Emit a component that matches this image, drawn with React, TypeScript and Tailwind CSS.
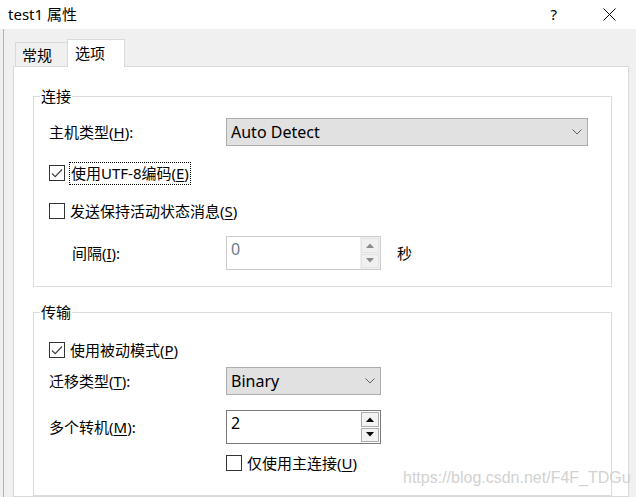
import React from 'react'

function Key({ children }: { children: React.ReactNode }) {
  return <span className="underline underline-offset-[2px] decoration-[1px]">{children}</span>
}

function CheckBox({ checked }: { checked?: boolean }) {
  return (
    <span className="w-[16px] h-[16px] shrink-0 border border-[#333333] bg-white flex items-center justify-center">
      {checked && (
        <svg width="14" height="14" viewBox="0 0 14 14">
          <path d="M2 7.5 L5.2 10.7 L12 3.5" stroke="#3c3c3c" strokeWidth="1.1" fill="none" />
        </svg>
      )}
    </span>
  )
}

function Chevron() {
  return (
    <svg width="10" height="6" viewBox="0 0 10 6" className="shrink-0">
      <path d="M0.5 0.5 L5 5 L9.5 0.5" stroke="#606060" strokeWidth="1" fill="none" />
    </svg>
  )
}

function Select({ value, className }: { value: string; className: string }) {
  return (
    <div
      className={`h-[28px] border border-[#adadad] bg-[#e1e1e1] flex items-center justify-between pl-[4px] pr-[5px] text-[16px] leading-[20px] text-black ${className}`}
    >
      <span>{value}</span>
      <Chevron />
    </div>
  )
}

function Triangle({ up, color }: { up?: boolean; color: string }) {
  return (
    <svg width="8" height="5" viewBox="0 0 8 5">
      <path d={up ? 'M0 5 L4 0.5 L8 5 Z' : 'M0 0 L4 4.5 L8 0 Z'} fill={color} />
    </svg>
  )
}

function Spinner({ value, disabled }: { value: string; disabled?: boolean }) {
  const btn = disabled
    ? 'bg-[#f0f0f0] border border-[#e3e3e3]'
    : 'bg-[#f3f3f3] border border-[#adadad]'
  const tri = disabled ? '#8a8a8a' : '#000000'
  return (
    <div
      className={`w-[155px] h-[34px] bg-white flex border ${
        disabled ? 'border-[#cccccc]' : 'border-[#7a7a7a]'
      }`}
    >
      <div
        className={`flex-1 pl-[4px] pt-[2px] text-[16px] leading-[20px] ${
          disabled ? 'text-[#6d7a8a]' : 'text-black'
        }`}
      >
        {value}
      </div>
      <div className={`w-[20px] flex flex-col gap-[1px] p-[1px] ${disabled ? 'bg-[#f0f0f0]' : ''}`}>
        <div className={`flex-1 flex items-center justify-center ${btn}`}>
          <Triangle up color={tri} />
        </div>
        <div className={`flex-1 flex items-center justify-center ${btn}`}>
          <Triangle color={tri} />
        </div>
      </div>
    </div>
  )
}

export default function App() {
  return (
    <div className="w-[636px] h-[497px] overflow-hidden relative flex flex-col bg-[#f0f0f0] text-black font-['Noto_Sans','Noto_Sans_CJK_SC',sans-serif]">
      {/* title bar */}
      <div className="h-[29px] shrink-0 bg-white flex items-center pl-[8px] pr-[20px] text-[15px] leading-none">
        <span>test1 属性</span>
        <span className="ml-auto">?</span>
        <svg width="13" height="13" viewBox="0 0 13 13" className="ml-[46px]">
          <path d="M0.5 0.5 L12.5 12.5 M12.5 0.5 L0.5 12.5" stroke="#000" strokeWidth="1" />
        </svg>
      </div>

      <div className="flex-1 flex min-h-0">
        <div className="w-[3px] shrink-0" />
        <div className="w-[1px] shrink-0 bg-[#a9b4c2]" />
        <div className="flex-1 flex flex-col pl-[9px] pt-[10px]">
          {/* tabs */}
          <div className="h-[27px] shrink-0 flex items-end pl-[2px] text-[15px] leading-[20px]">
            <div className="w-[53px] h-[24px] border-t border-l border-r border-[#d9d9d9] bg-[#f0f0f0] pl-[6px] flex items-center">
              常规
            </div>
            <div className="w-[58px] h-[28px] -ml-[1px] -mb-[1px] relative z-10 border-t border-l border-r border-[#d9d9d9] bg-white pl-[7px] pb-[2px] flex items-center">
              选项
            </div>
          </div>

          {/* tab page */}
          <div className="w-[616px] flex-1 border border-[#d9d9d9] bg-white pt-[19px] pl-[19px] pr-[16px] text-[15px] leading-[20px]">
            <fieldset className="border border-[#dcdcdc]">
              <legend className="ml-[6px] px-[1px] leading-[20px]">连接</legend>
              <div className="flex flex-col px-[15px] pb-[16px]">
                <div className="mt-[12px] h-[28px] flex items-center">
                  <span className="w-[177px] shrink-0">
                    主机类型(<Key>H</Key>):
                  </span>
                  <Select value="Auto Detect" className="w-[362px]" />
                </div>
                <div className="mt-[15px] h-[24px] flex items-center">
                  <CheckBox checked />
                  <span className="ml-[4px] h-[23px] border border-dotted border-black pl-[1px] pr-[1px] flex items-center">
                    使用UTF-8编码(<Key>E</Key>)
                  </span>
                </div>
                <div className="mt-[14px] h-[24px] flex items-center">
                  <CheckBox />
                  <span className="ml-[5px]">
                    发送保持活动状态消息(<Key>S</Key>)
                  </span>
                </div>
                <div className="mt-[13px] h-[34px] flex items-center">
                  <span className="w-[177px] shrink-0 pl-[23px]">
                    间隔(<Key>I</Key>):
                  </span>
                  <Spinner value="0" disabled />
                  <span className="ml-[16px]">秒</span>
                </div>
              </div>
            </fieldset>

            <fieldset className="mt-[15px] border border-[#dcdcdc]">
              <legend className="ml-[6px] px-[1px] leading-[20px]">传输</legend>
              <div className="flex flex-col px-[15px] pb-[20px]">
                <div className="mt-[16px] h-[24px] flex items-center">
                  <CheckBox checked />
                  <span className="ml-[5px]">
                    使用被动模式(<Key>P</Key>)
                  </span>
                </div>
                <div className="mt-[5px] h-[28px] flex items-center">
                  <span className="w-[177px] shrink-0">
                    迁移类型(<Key>T</Key>):
                  </span>
                  <Select value="Binary" className="w-[155px]" />
                </div>
                <div className="mt-[15px] h-[34px] flex items-center">
                  <span className="w-[177px] shrink-0">
                    多个转机(<Key>M</Key>):
                  </span>
                  <Spinner value="2" />
                </div>
                <div className="mt-[7px] h-[24px] flex items-center pl-[177px]">
                  <CheckBox />
                  <span className="ml-[5px]">
                    仅使用主连接(<Key>U</Key>)
                  </span>
                </div>
              </div>
            </fieldset>
          </div>
        </div>
        <div className="w-[7px] shrink-0" />
      </div>

      {/* watermark */}
      <div className="absolute left-[403px] top-[469px] whitespace-nowrap text-[16px] leading-[18px] text-[#d2d2d2] font-['Liberation_Sans',sans-serif]">
        https://blog.csdn.net/F4F_TDGu
      </div>
    </div>
  )
}
